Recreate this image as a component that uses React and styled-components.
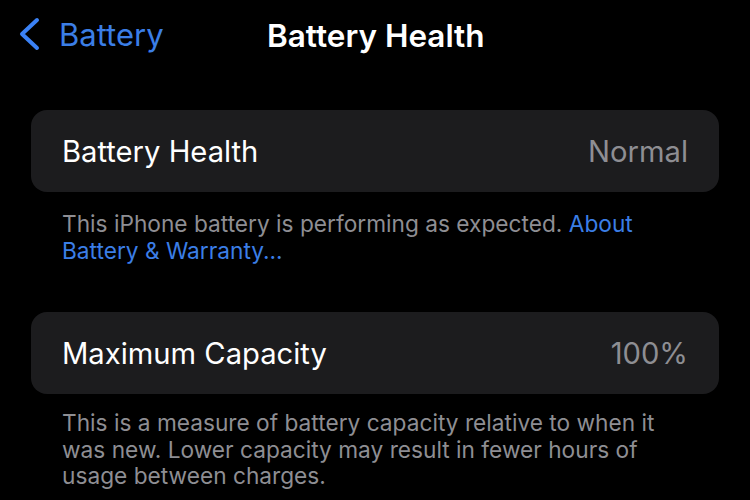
import styled, { createGlobalStyle } from "styled-components";

const GlobalStyle = createGlobalStyle`
  html, body {
    margin: 0;
    background: #000;
  }
  body {
    font-family: Inter, Roboto, "Noto Sans", sans-serif;
    -webkit-font-smoothing: antialiased;
  }
`;

export default function App() {
  return (
    <>
      <GlobalStyle />
      <Screen>
        <NavBar>
          <BackButton>
            <svg width="24" height="34" viewBox="0 0 24 34" fill="none">
              <path
                d="M20 3 L5 17 L20 31"
                stroke="#3b82f6"
                strokeWidth="4"
                strokeLinecap="round"
                strokeLinejoin="round"
              />
            </svg>
            <span>Battery</span>
          </BackButton>
          <Title>Battery Health</Title>
        </NavBar>

        <Section>
          <Card>
            <Label>Battery Health</Label>
            <Value>Normal</Value>
          </Card>
          <Footnote $gap={19}>
            This iPhone battery is performing as expected.{" "}
            <Link>About Battery &amp; Warranty...</Link>
          </Footnote>
        </Section>

        <Section>
          <Card>
            <Label>Maximum Capacity</Label>
            <Value>100%</Value>
          </Card>
          <Footnote $gap={16}>
            This is a measure of battery capacity relative to when it was new.
            Lower capacity may result in fewer hours of usage between charges.
          </Footnote>
        </Section>
      </Screen>
    </>
  );
}

const Screen = styled.div`
  width: 750px;
  height: 500px;
  overflow: hidden;
  background: #000;
  color: #fff;
`;

const NavBar = styled.header`
  position: relative;
  height: 70px;
  display: flex;
  align-items: center;
  padding: 0 17px;
`;

const BackButton = styled.div`
  display: flex;
  align-items: center;
  gap: 18px;
  color: #3b7ee6;
  font-size: 31px;
  margin-top: -2px;

  svg {
    display: block;
  }
`;

const Title = styled.h1`
  position: absolute;
  left: 267px;
  top: 0;
  margin: 0;
  height: 70px;
  display: flex;
  align-items: center;
  font-size: 31.5px;
  font-weight: 600;
`;

const Section = styled.section`
  padding: 40px 31px 0;

  & + & {
    padding-top: 48px;
  }
`;

const Card = styled.div`
  height: 82px;
  border-radius: 16px;
  background: #1c1c1e;
  display: flex;
  align-items: center;
  justify-content: space-between;
  padding: 0 31px;
`;

const Label = styled.span`
  font-size: 29.2px;
  color: #fff;
`;

const Value = styled.span`
  font-size: 29.2px;
  color: #8e8e93;
`;

const Footnote = styled.p`
  margin: ${(p) => p.$gap}px 0 0;
  padding: 0 31px;
  font-size: 22.7px;
  line-height: 26.5px;
  color: #8e8e93;
`;

const Link = styled.span`
  color: #3b7ee6;
`;
